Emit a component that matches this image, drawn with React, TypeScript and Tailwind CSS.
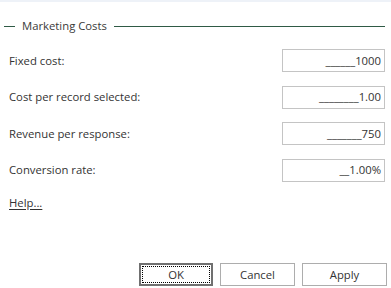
import React from 'react';

const FIELDS = [
  { label: 'Fixed cost:', value: '______1000' },
  { label: 'Cost per record selected:', value: '________1.00' },
  { label: 'Revenue per response:', value: '_______750' },
  { label: 'Conversion rate:', value: '__1.00%' },
];

const Field: React.FC<{ label: string; value: string }> = ({ label, value }) => (
  <div className="flex items-center justify-between h-[23px] pl-[9px] pr-[6px]">
    <span>{label}</span>
    <div className="w-[103px] h-[23px] border border-[#c4c4c4] bg-white flex items-center justify-end pr-[3px]">
      {value}
    </div>
  </div>
);

export default function App() {
  return (
    <div className="w-[391px] h-[288px] bg-white text-[11.3px] leading-[18px] text-[#333] font-['Open_Sans','Noto_Sans',sans-serif] flex flex-col overflow-hidden">
      <div className="h-[2px] bg-[#eef2f8]" />

      {/* Group header */}
      <div className="flex items-center mt-[16px] h-[16px] pl-[4px] pr-[6px]">
        <div className="w-[11px] h-px bg-[#2f5a45]" />
        <span className="px-[7px] text-[#3a3a3a]">Marketing Costs</span>
        <div className="flex-1 h-px bg-[#2f5a45]" />
      </div>

      {/* Fields */}
      <div className="flex flex-col gap-[13.5px] mt-[15px]">
        {FIELDS.map(f => <Field key={f.label} label={f.label} value={f.value} />)}
      </div>

      <div className="pl-[9px] mt-[12px]">
        <span className="underline underline-offset-2">Help...</span>
      </div>

      {/* Buttons */}
      <div className="mt-auto mb-[2px] flex justify-end gap-[7px] pr-[4px]">
        <button className="w-[74px] h-[23px] border-2 border-[#707070] bg-white p-px">
          <div className="w-full h-full border border-dotted border-black flex items-center justify-center">OK</div>
        </button>
        <button className="w-[75px] h-[23px] border border-[#adadad] bg-white">Cancel</button>
        <button className="w-[85px] h-[23px] border border-[#adadad] bg-white">Apply</button>
      </div>
    </div>
  );
}
